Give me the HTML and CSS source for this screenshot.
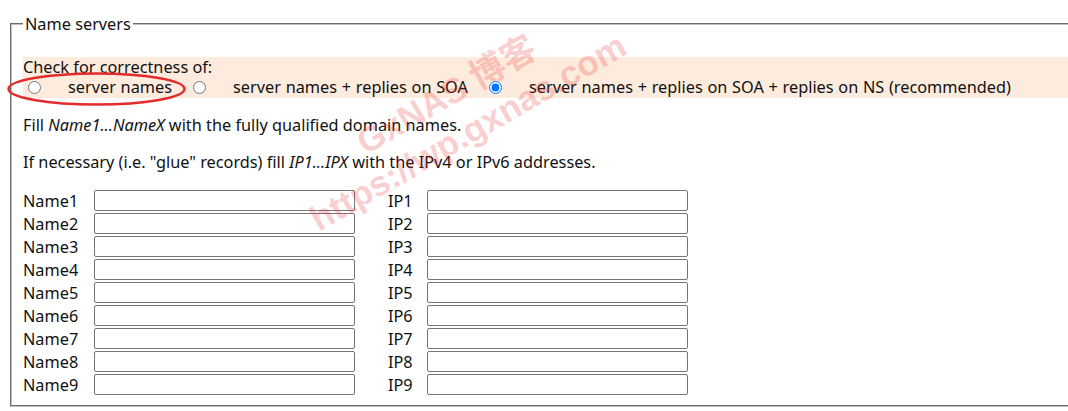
FILE: index.html
```html
<!DOCTYPE html>
<html lang="en">
<head>
<meta charset="utf-8">
<title>Name servers</title>
<link rel="stylesheet" href="styles.css">
</head>
<body>
<fieldset class="ns">
  <legend class="ns-legend">Name servers</legend>
  <div class="check">
    <div class="check-title">Check for correctness of:</div>
    <div class="check-opts">
      <label class="opt"><input type="radio" name="lvl" class="opt-radio"><span class="opt-text">server names</span></label>
      <label class="opt"><input type="radio" name="lvl" class="opt-radio"><span class="opt-text">server names + replies on SOA</span></label>
      <label class="opt"><input type="radio" name="lvl" class="opt-radio" checked><span class="opt-text">server names + replies on SOA + replies on NS (recommended)</span></label>
    </div>
  </div>
  <p class="hint hint-first">Fill <i>Name1...NameX</i> with the fully qualified domain names.</p>
  <p class="hint hint-second">If necessary (i.e. "glue" records) fill <i>IP1...IPX</i> with the IPv4 or IPv6 addresses.</p>
  <div class="servers">
    <span class="srv-label">Name1</span><input class="srv-input" type="text"><span class="srv-label">IP1</span><input class="srv-input" type="text">
    <span class="srv-label">Name2</span><input class="srv-input" type="text"><span class="srv-label">IP2</span><input class="srv-input" type="text">
    <span class="srv-label">Name3</span><input class="srv-input" type="text"><span class="srv-label">IP3</span><input class="srv-input" type="text">
    <span class="srv-label">Name4</span><input class="srv-input" type="text"><span class="srv-label">IP4</span><input class="srv-input" type="text">
    <span class="srv-label">Name5</span><input class="srv-input" type="text"><span class="srv-label">IP5</span><input class="srv-input" type="text">
    <span class="srv-label">Name6</span><input class="srv-input" type="text"><span class="srv-label">IP6</span><input class="srv-input" type="text">
    <span class="srv-label">Name7</span><input class="srv-input" type="text"><span class="srv-label">IP7</span><input class="srv-input" type="text">
    <span class="srv-label">Name8</span><input class="srv-input" type="text"><span class="srv-label">IP8</span><input class="srv-input" type="text">
    <span class="srv-label">Name9</span><input class="srv-input" type="text"><span class="srv-label">IP9</span><input class="srv-input" type="text">
  </div>
</fieldset>

<svg class="annot" width="186" height="40" viewBox="0 0 186 40" aria-hidden="true">
  <ellipse cx="96.5" cy="20" rx="88" ry="15.5" fill="none" stroke="#e42b2b" stroke-width="2.5"/>
</svg>

<div class="watermark" aria-hidden="true">
  <div class="wm-line">GxNAS 博客</div>
  <div class="wm-line">https://wp.gxnas.com</div>
</div>
</body>
</html>
```

FILE: styles.css
```css
html, body {
  overflow: hidden;
}

body {
  margin: 0;
  background: #ffffff;
  color: #111111;
  font-family: "Noto Sans", "Open Sans", sans-serif;
  font-size: 16.3px;
  position: relative;
  width: 1068px;
  height: 411px;
}

.ns {
  box-sizing: border-box;
  width: 1100px;
  margin: 14px 0 0 10px;
  padding: 0 11px 9px 11px;
  border: 2px groove #c0c0c0;
  min-inline-size: 0;
}

.ns-legend {
  padding: 0 2px;
  line-height: 20px;
}

.check {
  margin-top: 23px;
  background: #fdebdd;
}

.check-title {
  padding-top: 1px;
  height: 19.5px;
  line-height: 19.5px;
}

.check-opts {
  display: flex;
  align-items: center;
  height: 20.5px;
  line-height: 19px;
}

.opt {
  display: flex;
  align-items: center;
}

.opt-radio {
  width: 13px;
  height: 13px;
  margin: 0 3px 0 5px;
}

.opt-text {
  margin-left: 24px;
  margin-right: 16px;
  word-spacing: 0.5px;
}

.hint {
  line-height: 20px;
  margin: 0;
}

.hint-first {
  margin-top: 17px;
}

.hint-second {
  margin-top: 17px;
}

.servers {
  margin-top: 17px;
  display: grid;
  grid-template-columns: 71px 294px 39px 261px;
  grid-auto-rows: 23px;
  align-items: center;
}

.srv-label {
  line-height: 20px;
}

.srv-input {
  box-sizing: border-box;
  width: 261px;
  height: 21px;
  margin: 0;
  padding: 0 3px;
  border: 1px solid #767676;
  border-radius: 2px;
  background: #ffffff;
}

.annot {
  position: absolute;
  left: 0;
  top: 69px;
}

.watermark {
  position: absolute;
  left: 257px;
  top: 70px;
  width: 400px;
  text-align: center;
  transform: rotate(-30deg);
  transform-origin: 50% 50%;
  font-family: "Liberation Sans", "Noto Sans CJK SC", sans-serif;
  font-weight: bold;
  font-size: 35px;
  line-height: 43px;
  color: rgba(235, 40, 40, 0.24);
  pointer-events: none;
}
```
